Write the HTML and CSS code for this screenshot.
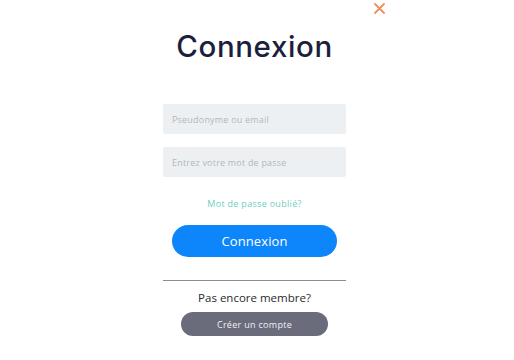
FILE: index.html
```html
<!DOCTYPE html>
<html lang="fr">
<head>
<meta charset="utf-8">
<title>Connexion</title>
<link rel="stylesheet" href="styles.css">
</head>
<body>
<div class="modal">
  <button class="close" aria-label="Fermer">
    <svg width="11" height="11" viewBox="0 0 11 11"><path d="M1 1L10 10M10 1L1 10" stroke="#f0905f" stroke-width="1.8" stroke-linecap="round"/></svg>
  </button>
  <div class="col">
    <h1 class="title">Connexion</h1>
    <form class="form">
      <input class="field" type="text" placeholder="Pseudonyme ou email">
      <input class="field" type="password" placeholder="Entrez votre mot de passe">
      <a class="forgot" href="#">Mot de passe oublié?</a>
      <button type="button" class="btn-primary">Connexion</button>
    </form>
    <hr class="sep">
    <p class="member">Pas encore membre?</p>
    <button type="button" class="btn-secondary">Créer un compte</button>
  </div>
</div>
</body>
</html>
```
FILE: styles.css
```css
html, body {
  margin: 0;
  padding: 0;
  background: #ffffff;
  font-family: "Open Sans", "Liberation Sans", sans-serif;
}
.modal {
  position: relative;
  width: 514px;
  height: 360px;
}
.close {
  position: absolute;
  left: 373px;
  top: 2px;
  width: 13px;
  height: 13px;
  padding: 1px;
  border: 0;
  background: none;
  display: flex;
  align-items: center;
  justify-content: center;
}
.col {
  width: 183px;
  margin-left: 163px;
  display: flex;
  flex-direction: column;
  align-items: center;
}
.title {
  margin: 26px 0 0;
  height: 40px;
  line-height: 40px;
  font-family: Inter, "Open Sans", sans-serif;
  font-size: 29.5px;
  font-weight: 500;
  color: #1b1e3c;
  letter-spacing: 0.6px;
}
.form {
  margin-top: 38px;
  width: 100%;
  display: flex;
  flex-direction: column;
  align-items: center;
}
.field {
  box-sizing: border-box;
  width: 183px;
  height: 30px;
  margin: 0 0 13px;
  border: 0;
  border-radius: 2px;
  background: #edf0f2;
  padding: 0 9px;
  font-family: inherit;
  font-size: 9px;
  letter-spacing: 0.2px;
  color: #333;
  outline: none;
}
.field::placeholder {
  color: #b2b7bd;
}
.forgot {
  margin-top: 7px;
  height: 14px;
  line-height: 14px;
  font-size: 9px;
  letter-spacing: 0.3px;
  color: #6ecfbd;
  text-decoration: none;
}
.btn-primary {
  margin-top: 14px;
  width: 165px;
  height: 32px;
  border: 0;
  border-radius: 16px;
  background: #0d86fb;
  color: #ffffff;
  font-family: inherit;
  font-size: 13px;
  letter-spacing: 0.1px;
  padding: 0;
}
.sep {
  box-sizing: border-box;
  width: 183px;
  margin: 23px 0 0;
  border: 0;
  border-top: 1px solid #8c8c8c;
  height: 0;
}
.member {
  margin: 9px 0 0;
  height: 16px;
  line-height: 16px;
  font-size: 11.5px;
  color: #2b2b2b;
}
.btn-secondary {
  margin-top: 6px;
  width: 147px;
  height: 24px;
  border: 0;
  border-radius: 12px;
  background: #6a6b7b;
  color: #f1f1f4;
  font-family: inherit;
  font-size: 9px;
  letter-spacing: 0.3px;
  padding: 0;
}
```
